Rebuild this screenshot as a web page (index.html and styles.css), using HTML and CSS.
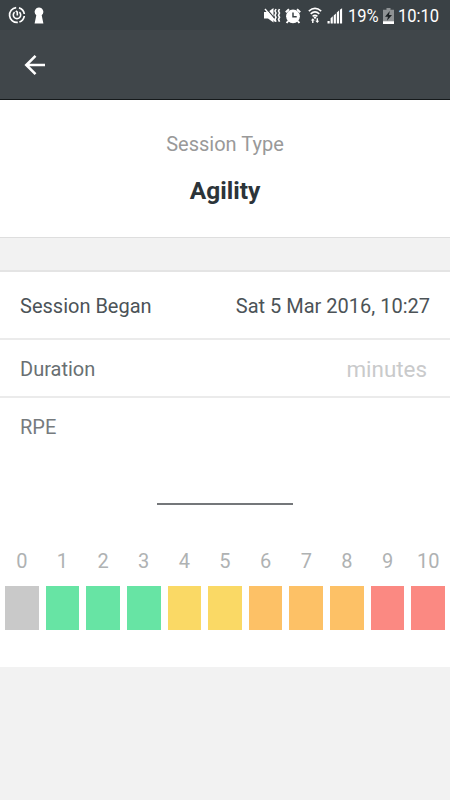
FILE: index.html
```
<!DOCTYPE html>
<html lang="en">
<head>
    <title>Session</title>
    <meta charset="UTF-8">
    <meta name="viewport" content="width=device-width, initial-scale=1.0">
    <link rel="stylesheet" href="styles.css">
</head>

<body>
    <div class="status-bar">
        <div class="status-left">
            <svg width="18" height="18" viewBox="0 0 18 18" fill="none" stroke="#fff">
                <path d="M8.2 1.6A7.4 7.4 0 1 0 9.8 16.4M11 1.9A7.4 7.4 0 0 1 16.3 8M16.3 10A7.4 7.4 0 0 1 11.4 16" stroke-width="1.7"/>
                <path d="M6.6 6.1A3.7 3.7 0 1 0 11.4 6.1M7.8 4.8L9.3 6.2V9.4" stroke-width="1.6"/>
            </svg>
            <svg width="10" height="17" viewBox="0 0 10 17" fill="#fff">
                <path d="M5 .5a4.4 4.4 0 0 1 2.7 7.8L9.4 16.5H.6L2.3 8.3A4.4 4.4 0 0 1 5 .5z"/>
            </svg>
        </div>
        <div class="status-right">
            <svg class="icon-mute" width="17" height="17" viewBox="0 0 17 17">
                <path d="M0 5h4L9.5 1v14.5L4 11.5H0z" fill="#fff"/>
                <path d="M2 1.2l10.5 12.5" stroke="#3a4145" stroke-width="1.3"/>
                <path d="M1 2l10.5 12.5" stroke="#fff" stroke-width="1.4"/>
                <path d="M12 2l-1 2 1 2-1 2.3 1 2-1 2 1 2.4M15.5 2l-1 2 1 2-1 2.3 1 2-1 2 1 2.4" fill="none" stroke="#fff" stroke-width="1.6"/>
            </svg>
            <svg class="icon-alarm" width="16" height="16" viewBox="0 0 16 16">
                <circle cx="8" cy="8.3" r="6.9" fill="#fff"/>
                <path d="M.8 4.2l3.2-3M15.2 4.2l-3.2-3M3.2 13l-1.6 2M12.8 13l1.6 2" stroke="#fff" stroke-width="2"/>
                <path d="M8 4.5v4.3h3.7" fill="none" stroke="#3a4145" stroke-width="1.5"/>
            </svg>
            <svg class="icon-wifi" width="14" height="17" viewBox="0 0 14 17">
                <path d="M.8 4.1Q7-1.3 13.2 4.1M2.7 6.8q4.3-3.7 8.6 0M4.6 9.3q2.4-2 4.8 0" fill="none" stroke="#fff" stroke-width="1.6"/>
                <circle cx="7" cy="10.6" r="1.2" fill="#fff"/>
                <path d="M4.8 11.3l2 2.3H5.5V16H4.1v-2.4H2.8zM9.3 16l-2-2.3h1.3v-2.4H10v2.4h1.3z" fill="#fff"/>
            </svg>
            <svg class="icon-signal" width="16" height="16" viewBox="0 0 16 16" fill="#fff">
                <path d="M.5 13h2.2v2.5H.5zM3.6 10.3l2.2-2v7.2H3.6zM6.7 7.4l2.2-2v10.1H6.7zM9.8 4.5L12 2.6v12.9H9.8zM12.9 1.7L15.1.2v15.3h-2.2z"/>
            </svg>
            <span class="battery-level">19%</span>
            <svg class="icon-battery" width="11" height="16" viewBox="0 0 11 16">
                <path d="M3.5 0h4v1.8H11V16H0V1.8h3.5z" fill="#8e9294"/>
                <path d="M0 13.3h11V16H0z" fill="#fff"/>
                <path d="M6.8 3L2 8.7h3L3.9 12.7 9 7H6z" fill="#1b2023"/>
            </svg>
            <span class="clock">10:10</span>
        </div>
    </div>

    <header class="toolbar">
        <a href="#" class="back" aria-label="Back">
            <svg width="22" height="22" viewBox="0 0 22 22" fill="none" stroke="#fff" stroke-width="2.6">
                <path d="M21 11H3M11.5 1.8L2.3 11l9.2 9.2"/>
            </svg>
        </a>
    </header>

    <section class="session-type">
        <div class="label">Session Type</div>
        <h1>Agility</h1>
    </section>

    <section class="details">
        <div class="row row-began">
            <span>Session Began</span>
            <span class="value">Sat 5 Mar 2016, 10:27</span>
        </div>
        <div class="row row-duration">
            <label for="duration">Duration</label>
            <input type="text" id="duration" placeholder="minutes">
        </div>
        <div class="rpe">
            <div class="rpe-label">RPE</div>
            <div class="rpe-value"></div>
            <div class="scale">
                <div class="step rest"><span>0</span></div>
                <div class="step easy"><span>1</span></div>
                <div class="step easy"><span>2</span></div>
                <div class="step easy"><span>3</span></div>
                <div class="step medium"><span>4</span></div>
                <div class="step medium"><span>5</span></div>
                <div class="step hard"><span>6</span></div>
                <div class="step hard"><span>7</span></div>
                <div class="step hard"><span>8</span></div>
                <div class="step max"><span>9</span></div>
                <div class="step max"><span>10</span></div>
            </div>
        </div>
    </section>
</body>
</html>
```

FILE: styles.css
```
:root {
    --bar-color: #40464a;
    --background-color: #f2f2f2;
    --border-color: #e4e4e4;
}

* {
    box-sizing: border-box;
}

body {
    margin: 0;
    font-family: Roboto, sans-serif;
    font-size: 20px;
    line-height: 24px;
    background: var(--background-color);
    color: #4c5357;
}

svg {
    display: block;
    flex: none;
}

.status-bar {
    display: flex;
    justify-content: space-between;
    height: 30px;
    padding: 0 10px 0 8px;
    background: #3a4145;
    color: #fff;
}

.status-left,
.status-right {
    display: flex;
    align-items: center;
}

.status-left {
    gap: 8px;
}

.status-right {
    font-size: 19px;
    padding-top: 1px;
}

.icon-alarm {
    margin-left: 4px;
}

.icon-wifi {
    margin-left: 7px;
}

.icon-signal {
    margin-left: 5px;
}

/* condensed status text */
.battery-level,
.clock {
    transform: scaleX(0.87);
    transform-origin: left;
    white-space: nowrap;
    padding-top: 1px;
}

.battery-level {
    width: 30px;
    margin-left: 5px;
}

.clock {
    width: 42px;
}

.icon-battery {
    margin: 0 4px 0 5px;
}

.toolbar {
    display: flex;
    align-items: center;
    height: 70px;
    padding-left: 24px;
    background: var(--bar-color);
    border-bottom: 1px solid #15191b;
}

.session-type {
    height: 138px;
    padding-top: 32px;
    background: white;
    border-bottom: 1px solid #dedede;
    text-align: center;
}

.label {
    color: #999;
}

h1 {
    margin: 21px 0 0;
    font-size: 24.5px;
    line-height: 28px;
    font-weight: 700;
    color: #2c3439;
}

.details {
    height: 397px;
    margin-top: 32px;
    background: white;
    border-top: 2px solid var(--border-color);
}

.row {
    display: flex;
    align-items: center;
    justify-content: space-between;
    padding: 2px 20px 0;
    border-bottom: 2px solid #ebebeb;
}

.row-began {
    height: 68px;
}

.row-duration {
    height: 58px;
    color: #696f72;
}

.row input {
    width: 160px;
    padding: 0 3px 0 0;
    border: none;
    outline: none;
    background: none;
    font-family: inherit;
    font-size: 22.4px;
    text-align: right;
}

.row input::placeholder {
    color: #c9cacb;
}

.rpe {
    padding: 17px 5px 0;
}

.rpe-label {
    padding-left: 15px;
    color: #767b7e;
}

.rpe-value {
    width: 136px;
    height: 66px;
    margin: 0 auto;
    border-bottom: 2px solid #74777a;
}

.scale {
    display: grid;
    grid-template-columns: repeat(11, 1fr);
    column-gap: 7px;
    margin-top: 44px;
    color: #afb2b3;
    text-align: center;
}

.step::after {
    content: "";
    display: block;
    height: 44px;
    margin-top: 13px;
    background: var(--step-color);
}

.rest {
    --step-color: #c9c9c9;
}

.easy {
    --step-color: #67e4a4;
}

.medium {
    --step-color: #fad965;
}

.hard {
    --step-color: #fdc166;
}

.max {
    --step-color: #fb8982;
}
```
